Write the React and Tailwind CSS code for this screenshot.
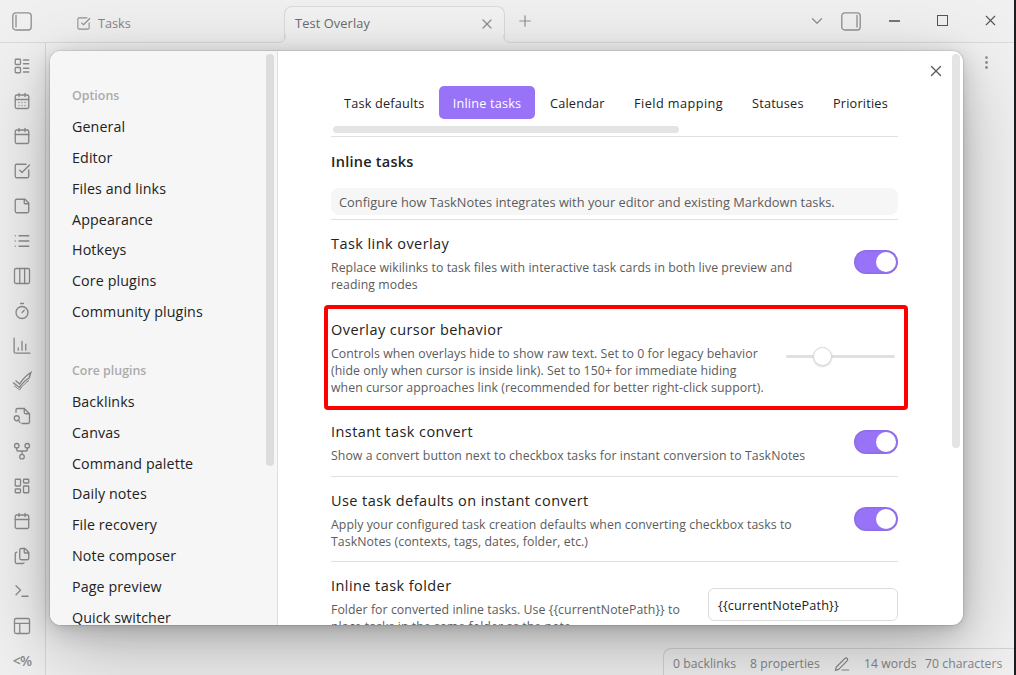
import React from "react";
import {
  LayoutList, CalendarDays, Calendar, SquareCheckBig, StickyNote, List, Timer,
  LayoutDashboard, Files, Terminal, X, Plus, ChevronDown, EllipsisVertical,
} from "lucide-react";

const svgProps = {
  viewBox: "0 0 24 24", fill: "none", stroke: "currentColor",
  strokeLinecap: "round", strokeLinejoin: "round",
};

const Columns = () => (
  <svg {...svgProps} width="18" height="18" strokeWidth="1.75">
    <rect x="2" y="2" width="20" height="20" rx="2" />
    <path d="M9 2v20M15.5 2v20" />
  </svg>
);
const BarChart = () => (
  <svg {...svgProps} width="18" height="18" strokeWidth="1.75">
    <path d="M1.500 1.500v18a2 2 0 0 0 2 2h19M7 17.500v-3M12 17.500V6M17 17.500v-8" />
  </svg>
);
const DoubleCheck = () => (
  <svg width="20" height="20" viewBox="0 0 20 20" fill="none" stroke="currentColor" strokeWidth="1.4">
    <path d="M1 11.5L7.5 16.5C11 11 13.5 9 17.2 7L18.8 1.5C14 4.5 10.500 8.500 7.500 13L3.500 9.500" />
    <path d="M2 14.500L7.500 19C11 14 14 11.500 17 9.500" strokeWidth="1" />
  </svg>
);
const FileLookup = () => (
  <svg {...svgProps} width="18" height="18" strokeWidth="1.75">
    <path d="M4 7V4a2 2 0 0 1 2-2h9l7 7v11a2 2 0 0 1-2 2h-8" />
    <path d="M15 2v5a2 2 0 0 0 2 2h5M7.500 18l2 3" />
    <circle cx="5" cy="15" r="3.300" />
  </svg>
);
const Graph = () => (
  <svg {...svgProps} width="18" height="18" strokeWidth="1.75">
    <circle cx="5" cy="5" r="3" />
    <circle cx="19" cy="5" r="3" />
    <circle cx="12" cy="19.500" r="3" />
    <path d="M5 8v2.500a1.500 1.500 0 0 0 1.500 1.500h11a1.500 1.500 0 0 0 1.500-1.500V8M12 12v4.500" />
  </svg>
);
const LayoutPanels = () => (
  <svg {...svgProps} width="18" height="18" strokeWidth="1.75">
    <rect x="2" y="2" width="20" height="20" rx="2" />
    <path d="M2 8.500h20M9 22V8.500" />
  </svg>
);
const Pen = () => (
  <svg {...svgProps} width="16" height="16" strokeWidth="1.7">
    <path d="M12 21h10M16.500 3.500a2.500 2.500 0 0 1 3.500 3.500L7 20l-5 1.500 1.500-5z" />
  </svg>
);
const SidePanel = ({ right }) => (
  <svg width="20" height="19" viewBox="0 0 20 19" fill="none" stroke="currentColor">
    <rect x="0.8" y="0.8" width="18.4" height="17.2" rx="3" strokeWidth="1.3" />
    <path d={right ? "M16 3.5V15" : "M4 3.5V15"} strokeWidth="1.3" strokeLinecap="round" />
  </svg>
);

const ribbon = [
  LayoutList, CalendarDays, Calendar, SquareCheckBig, StickyNote, List, Columns, Timer, BarChart,
  DoubleCheck, FileLookup, Graph, LayoutDashboard, Calendar, Files, Terminal, LayoutPanels,
];

function NavGroup({ title, items }) {
  return (
    <div className="mb-[28px]">
      <div className="h-[31px] text-[12.4px] font-semibold leading-[31px] text-[#ababab]">{title}</div>
      {items.map((t) => (
        <div key={t} className="h-[30.85px] text-[14.25px] leading-[31px] tracking-[0.12px] text-[#222]">{t}</div>
      ))}
    </div>
  );
}

function Toggle() {
  return (
    <div className="flex h-6 w-11 shrink-0 items-center justify-end rounded-full bg-[#9873f7] pr-[2.5px] shadow-[inset_0_0_3px_rgba(0,0,0,0.18)]">
      <div className="size-[19.5px] rounded-full bg-white" />
    </div>
  );
}

function Setting({ title, lines, children, className }) {
  return (
    <div className={"flex items-center justify-between " + className}>
      <div className="self-start whitespace-nowrap">
        <div className="h-[21px] text-[14.5px] leading-[21px] tracking-[0.43px] text-[#222]">{title}</div>
        <div className="mt-[5px] text-[12.3px] leading-[17px] tracking-[0.06px] text-[#5c5c5c]">
          {lines.map((l) => <div key={l}>{l}</div>)}
        </div>
      </div>
      {children}
    </div>
  );
}

export default function App() {
  return (
    <div className="relative h-[675px] w-[1016px] overflow-hidden bg-[#f1f1f1] font-['Open_Sans','Noto_Sans',sans-serif] text-[#222]">
      <div className="flex h-full flex-col border-r-2 border-[#1d1d1f]">
        <header className="flex h-[43px] shrink-0 items-center border-b border-[#dadada] bg-[#f0f0f0] text-[#8f8f8f]">
          <div className="ml-3 flex w-[64px]"><SidePanel /></div>
          <SquareCheckBig size={15} strokeWidth={1.7} className="mt-1" />
          <span className="ml-[7px] mt-[5px] w-[186px] text-[12.7px] text-[#858585]">Tasks</span>
          <div className="relative z-10 mt-[6px] flex h-[37px] w-[221px] shrink-0 items-center self-start rounded-t-lg border border-b-0 border-[#dadada] bg-[#f2f2f2] pb-[2px]">
            <svg className="absolute -left-[7px] bottom-0" width="8" height="8" viewBox="0 0 8 8">
              <path d="M0 8V7.500Q7.500 7.500 7.500 0H8V8Z" fill="#f2f2f2" />
              <path d="M0 7.500Q7.500 7.500 7.500 0" fill="none" stroke="#dadada" />
            </svg>
            <svg className="absolute -right-[7px] bottom-0" width="8" height="8" viewBox="0 0 8 8">
              <path d="M8 8V7.500Q0.500 7.500 0.500 0H0V8Z" fill="#f2f2f2" />
              <path d="M8 7.500Q0.500 7.500 0.500 0" fill="none" stroke="#dadada" />
            </svg>
            <span className="ml-[10px] w-[184px] text-[12.8px] tracking-[0.1px] text-[#6c6c6c]">Test Overlay</span>
            <X size={16} strokeWidth={1.8} />
          </div>
          <Plus size={18} strokeWidth={1.6} className="ml-[11px]" />
          <ChevronDown size={18} strokeWidth={1.6} className="ml-[274px]" />
          <div className="ml-[15px]"><SidePanel right /></div>
          <div className="ml-[28px] h-[1.5px] w-[11px] bg-[#777]" />
          <div className="ml-[37px] mt-[-2px] size-[11px] border-[1.4px] border-[#555]" />
          <X size={17} strokeWidth={1.6} className="ml-[34px] mt-[-2px] text-[#555]" />
        </header>
        <div className="flex min-h-0 flex-1">
          <nav className="flex w-[46px] shrink-0 flex-col items-center border-r border-[#d6d6d6] bg-[#f0f0f0] pr-px pt-[5px] text-[#8c8c8c]">
            {ribbon.map((Icon, i) => (
              <div key={i} className="flex h-[35px] shrink-0 items-center justify-center"><Icon size={18} strokeWidth={1.75} /></div>
            ))}
            <div className="flex h-[35px] shrink-0 items-center pb-px text-[14px] font-semibold tracking-[-0.8px]">&lt;%</div>
          </nav>
          <div className="flex flex-1 flex-col items-end justify-between">
            <EllipsisVertical size={17} className="mr-[19px] mt-[11px] text-[#8c8c8c]" />
            <footer className="flex h-[27px] w-[351px] items-center whitespace-nowrap rounded-tl-lg border-l border-t border-[#d4d4d4] bg-[#f0f0f0] pl-[9px] pt-[4px] text-[12.2px] tracking-[0.05px] text-[#858585]">
              <span className="w-[77px]">0 backlinks</span>
              <span className="w-[84px]">8 properties</span>
              <Pen />
              <span className="ml-[14px] w-[61px]">14 words</span>
              <span>70 characters</span>
            </footer>
          </div>
        </div>
      </div>

      <div role="dialog" className="absolute left-[50px] top-[51px] z-20 flex h-[574px] w-[913px] overflow-hidden rounded-[11px] bg-white shadow-[0_0_0_1px_rgba(0,0,0,0.08),0_2px_7px_rgba(0,0,0,0.08),0_6px_25px_rgba(0,0,0,0.17),0_24px_80px_rgba(0,0,0,0.26)]">
        <aside className="flex w-[228px] shrink-0 justify-between border-r border-[#e0e0e0] bg-[#f6f6f6] pl-[22px] pr-[3px] pt-[3px]">
          <div className="pt-[26px]">
            <NavGroup title="Options" items={["General", "Editor", "Files and links", "Appearance", "Hotkeys", "Core plugins", "Community plugins"]} />
            <NavGroup title="Core plugins" items={["Backlinks", "Canvas", "Command palette", "Daily notes", "File recovery", "Note composer", "Page preview", "Quick switcher"]} />
          </div>
          <div className="h-[412px] w-2 rounded-full bg-[#dcdcdc]" />
        </aside>
        <main className="ml-[53px] w-[567px] shrink-0">
          <div className="flex h-[86px] flex-col border-b border-[#e0e0e0] pt-[35px]">
            <div className="flex h-[33px] items-center whitespace-nowrap text-[12.7px] tracking-[0.2px]">
              <span className="w-[108px] pl-[13px] pt-[2px]">Task defaults</span>
              <span className="flex h-full w-[96px] items-center justify-center rounded-[5px] bg-[#9873f7] pt-[2px] text-white">Inline tasks</span>
              <span className="ml-[15px] w-[84px] pt-[2px]">Calendar</span>
              <span className="w-[118px] pt-[2px] tracking-[0.45px]">Field mapping</span>
              <span className="w-[81px] pt-[2px]">Statuses</span>
              <span className="pt-[2px]">Priorities</span>
            </div>
            <div className="ml-[2px] mt-[7px] h-[7px] w-[346px] rounded-full bg-[#e4e4e4]" />
          </div>
          <h2 className="mt-[14px] h-[22px] text-[14.5px] font-semibold leading-[22px] tracking-[0.25px]">Inline tasks</h2>
          <div className="mt-[15px] h-[27px] whitespace-nowrap rounded-lg bg-[#f6f6f6] pl-2 text-[12.8px] leading-[28px] tracking-[0.02px] text-[#5c5c5c]">Configure how TaskNotes integrates with your editor and existing Markdown tasks.</div>
          <div className="mt-1 border-t border-[#e0e0e0]" />
          <Setting className="h-[85px] pt-[13px] pb-[14px]" title="Task link overlay" lines={["Replace wikilinks to task files with interactive task cards in both live preview and", "reading modes"]}><Toggle /></Setting>
          <div className="-ml-[7px] h-[105px] w-[584px] rounded-[4px] border-4 border-[#ff0000]">
            <Setting className="h-[97px] pb-[12px] pl-[3px] pr-[9px] pt-[10px]" title="Overlay cursor behavior" lines={["Controls when overlays hide to show raw text. Set to 0 for legacy behavior", "(hide only when cursor is inside link). Set to 150+ for immediate hiding", "when cursor approaches link (recommended for better right-click support)."]}>
              <div className="flex h-[3px] w-[109px] items-center rounded-full bg-[#e0e0e0]">
                <div className="ml-[27px] size-[19px] shrink-0 rounded-full border border-[#d8d8d8] bg-white shadow-[0_1px_2px_rgba(0,0,0,0.15)]" />
              </div>
            </Setting>
          </div>
          <Setting className="h-[67px] border-b border-[#e0e0e0] pt-[11px] pb-[13px]" title="Instant task convert" lines={["Show a convert button next to checkbox tasks for instant conversion to TaskNotes"]}><Toggle /></Setting>
          <Setting className="h-[85px] border-b border-[#e0e0e0] pt-[13px] pb-[13px]" title="Use task defaults on instant convert" lines={["Apply your configured task creation defaults when converting checkbox tasks to", "TaskNotes (contexts, tags, dates, folder, etc.)"]}><Toggle /></Setting>
          <Setting className="h-[85px] pt-[13px] pb-[13px]" title="Inline task folder" lines={["Folder for converted inline tasks. Use {{currentNotePath}} to", "place tasks in the same folder as the note"]}>
            <div className="h-[33px] w-[190px] rounded-md border border-[#dcdcdc] bg-white pl-[9px] text-[12.7px] leading-[32px] tracking-[0.12px]">{"{{currentNotePath}}"}</div>
          </Setting>
        </main>
        <div className="flex flex-1 items-start justify-between pr-[3px] pt-[3px]">
          <X size={18} strokeWidth={1.8} className="ml-[29px] mt-[8px] text-[#5c5c5c]" />
          <div className="h-[394px] w-2 rounded-full bg-[#e4e4e4]" />
        </div>
      </div>
    </div>
  );
}
